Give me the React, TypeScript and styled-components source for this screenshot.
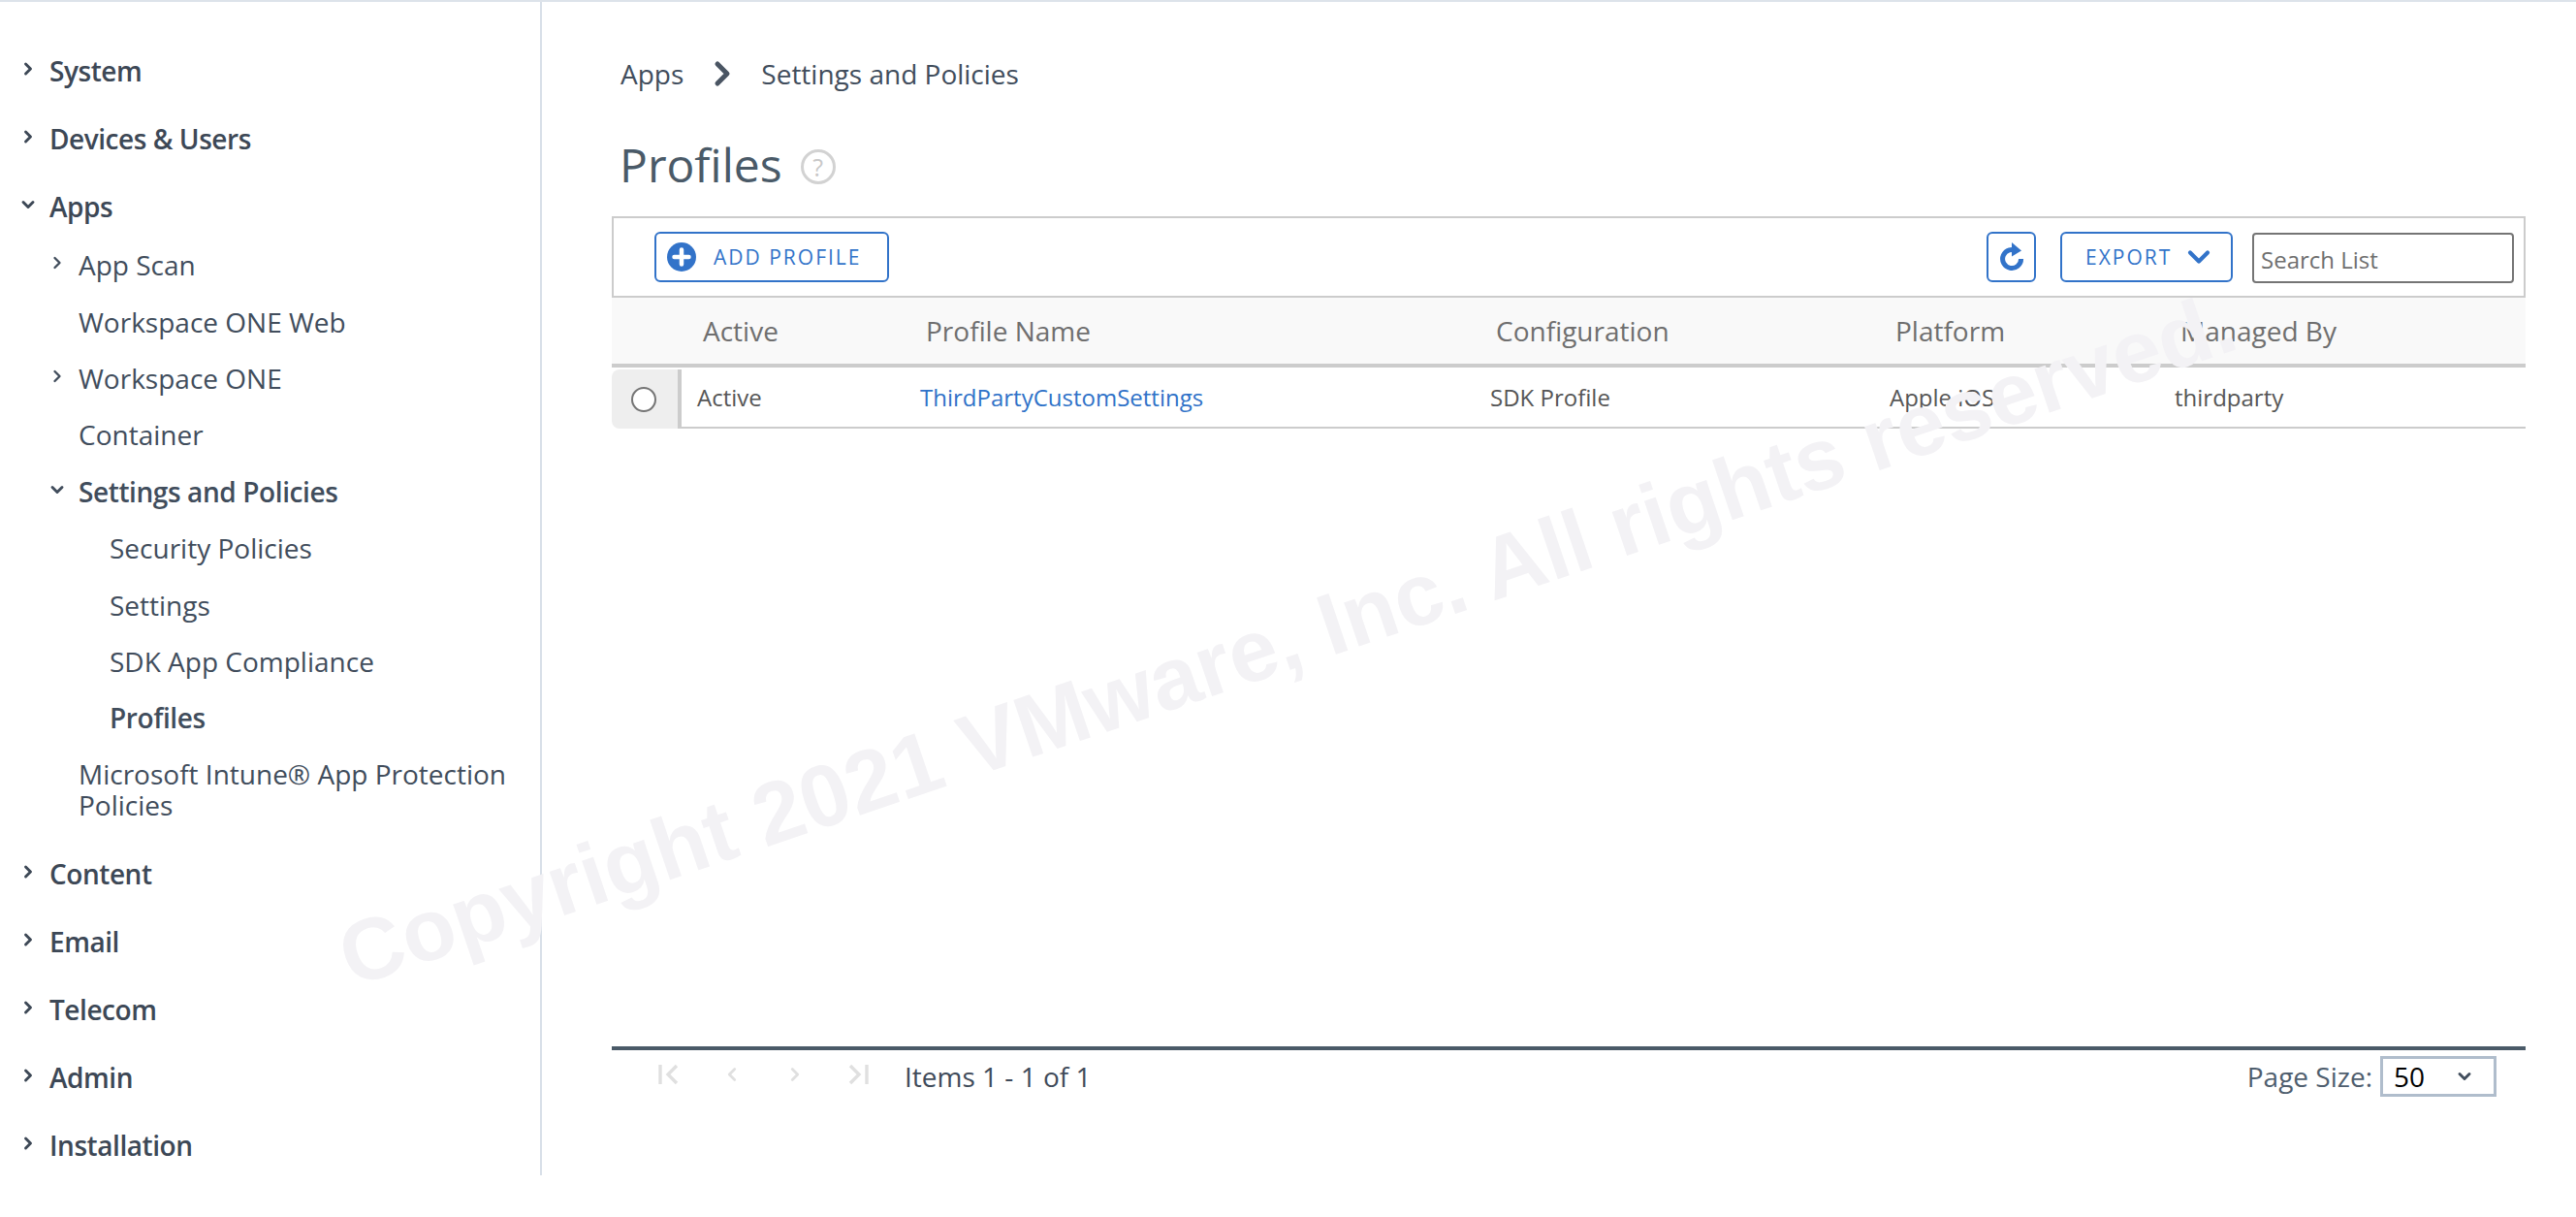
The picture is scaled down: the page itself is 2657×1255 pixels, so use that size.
import React from 'react';
import styled, { createGlobalStyle } from 'styled-components';
import { ChevronDown, ChevronLeft, ChevronRight } from 'lucide-react';

const GlobalStyle = createGlobalStyle`
  html, body {
    margin: 0;
    padding: 0;
    background: #fff;
    font-family: 'Open Sans', 'Liberation Sans', sans-serif;
    color: #414d5c;
  }
  * { box-sizing: border-box; }
`;

const Page = styled.div`
  position: relative;
  width: 2657px;
  height: 1255px;
  overflow: hidden;
  border-top: 2px solid #dde3ea;
`;

const Layout = styled.div`
  display: flex;
  height: 1210px;
`;

const Sidebar = styled.nav`
  width: 559px;
  flex-shrink: 0;
  border-right: 2px solid #d8dfe8;
  padding-top: 36px;
`;

const TopRow = styled.div`
  display: flex;
  align-items: center;
  height: 70px;
  padding-left: 19px;
  font-size: 28px;
  font-weight: 600;
  letter-spacing: -0.45px;
  color: #3d4856;
`;

const Caret = styled.span`
  display: flex;
  justify-content: center;
  width: 20px;
  margin-right: 12px;
  margin-top: -4px;
`;

const SubList = styled.div`
  margin: -4px 0 20px;
`;

const SubRow = styled.div<{ $level: number; $bold?: boolean }>`
  display: flex;
  align-items: center;
  height: 58.4px;
  padding-left: ${p => (p.$level === 1 ? 49 : 113)}px;
  font-size: 28px;
  font-weight: ${p => (p.$bold ? 600 : 400)};
  letter-spacing: ${p => (p.$bold ? '-0.4px' : '0')};
  color: #414d5c;
`;

const NoCaret = styled.span`
  display: block;
  width: 32px;
`;

const WrappedRow = styled.div`
  padding: 12px 20px 0 81px;
  font-size: 28px;
  line-height: 32px;
  color: #414d5c;
`;

const Main = styled.main`
  flex: 1;
  display: flex;
  flex-direction: column;
  padding: 0 52px 0 72px;
`;

const Breadcrumb = styled.div`
  display: flex;
  align-items: center;
  height: 40px;
  margin: 54px 0 0 9px;
  font-size: 28px;
  color: #414d5c;
`;

const Crumb = styled.span``;

const CrumbSep = styled.span`
  display: flex;
  justify-content: center;
  margin: 0 20px;
  color: #4a5563;
`;

const TitleRow = styled.div`
  display: flex;
  align-items: center;
  gap: 19px;
  height: 68px;
  margin: 39px 0 0 8px;
`;

const Title = styled.h1`
  margin: 0;
  font-size: 48px;
  font-weight: 400;
  color: #4a5a68;
`;

const HelpIcon = styled.span`
  display: flex;
  align-items: center;
  justify-content: center;
  width: 36px;
  height: 36px;
  margin-top: 6px;
  border: 3px solid #d2d2d2;
  border-radius: 50%;
  font-size: 25px;
  color: #c8c8c8;
`;

const Toolbar = styled.div`
  display: flex;
  align-items: center;
  height: 84px;
  margin-top: 20px;
  padding: 0 10px 0 42px;
  border: 2px solid #cccccc;
`;

const OutlineButton = styled.button`
  display: flex;
  align-items: center;
  height: 52px;
  padding: 0;
  border: 2px solid #3273c9;
  border-radius: 6px;
  background: #fff;
  color: #3273c9;
  font-family: inherit;
  font-size: 21px;
  letter-spacing: 2px;
`;

const AddButton = styled(OutlineButton)`
  width: 242px;
  gap: 17px;
  padding-left: 10px;
`;

const RefreshButton = styled(OutlineButton)`
  width: 51px;
  justify-content: center;
  margin-left: auto;
`;

const ExportButton = styled(OutlineButton)`
  width: 178px;
  gap: 10px;
  padding-left: 24px;
  margin-left: 25px;
`;

const SearchBox = styled.div`
  display: flex;
  align-items: center;
  width: 270px;
  height: 52px;
  margin: 2px 0 0 20px;
  padding: 2px 0 0 7px;
  border: 2px solid #757575;
  border-radius: 4px;
  font-size: 24px;
  color: #6f6f6f;
`;

const columns = '72px 230px 588px 412px 294px 1fr';

const HeaderRow = styled.div`
  display: grid;
  grid-template-columns: ${columns};
  align-items: center;
  height: 72px;
  background: #f9f9f9;
  border-bottom: 4px solid #cccccc;
  font-size: 28px;
  color: #6f6f6f;
`;

const HeaderCell = styled.div`
  padding-left: 22px;
`;

const DataRow = styled.div`
  display: grid;
  grid-template-columns: ${columns};
  align-items: center;
  height: 63px;
  font-size: 24px;
  color: #565656;
`;

const RadioCell = styled.div`
  display: flex;
  align-items: center;
  height: 61px;
  margin-top: 2px;
  padding-left: 20px;
  background: #eeeeee;
  border-right: 4px solid #cccccc;
  border-radius: 8px 0 0 8px;
`;

const Radio = styled.span`
  display: block;
  width: 26px;
  height: 26px;
  border: 2px solid #757575;
  border-radius: 50%;
  background: #fff;
`;

const Cell = styled.div`
  display: flex;
  align-items: center;
  height: 100%;
  padding-left: 16px;
  border-bottom: 2px solid #cccccc;
`;

const LinkCell = styled(Cell)`
  color: #2f72c8;
`;

const Spacer = styled.div`
  flex: 1;
`;

const Pager = styled.footer`
  display: flex;
  align-items: flex-start;
  height: 133px;
  padding: 6px 30px 0 0;
  border-top: 4px solid #4a5a68;
`;

const PagerIcons = styled.div`
  display: flex;
  align-items: center;
  gap: 43px;
  height: 38px;
  padding-left: 48px;
  color: #e0e0e0;
`;

const PagerSlot = styled.span`
  display: flex;
  justify-content: center;
  width: 22px;
`;

const PagerText = styled.span`
  display: flex;
  align-items: center;
  height: 42px;
  margin-left: 37px;
  font-size: 28px;
  color: #3f4b5a;
`;

const PageSize = styled.div`
  display: flex;
  align-items: center;
  gap: 8px;
  margin-left: auto;
  font-size: 28px;
  color: #4f5e6e;
`;

const SizeSelect = styled.div`
  display: flex;
  align-items: center;
  justify-content: space-between;
  width: 120px;
  height: 42px;
  padding: 0 20px 0 11px;
  border: 3px solid #b0bdcc;
  font-size: 28px;
  color: #000;
`;

// sits above the table on purpose, it covers parts of the text in the reference
const Watermark = styled.div`
  position: absolute;
  left: 299px;
  top: 606px;
  transform: rotate(-18.7deg);
  transform-origin: 50% 50%;
  font-family: 'Liberation Sans', Arial, sans-serif;
  font-size: 90px;
  font-weight: 700;
  white-space: nowrap;
  color: #f3f2f5;
  pointer-events: none;
`;

const ClosedCaret = () => <ChevronRight size={24} strokeWidth={3.5} />;
const OpenCaret = () => <ChevronDown size={24} strokeWidth={3.5} />;
const SubCaret = () => <ChevronRight size={20} strokeWidth={2.8} />;

const PlusIcon = () => (
  <svg width="32" height="32" viewBox="0 0 32 32">
    <circle cx="16" cy="16" r="15" fill="#3273c9" />
    <path d="M16 8.5v15M8.5 16h15" stroke="#fff" strokeWidth="4.5" strokeLinecap="round" />
  </svg>
);

const RefreshIcon = () => (
  <svg width="28" height="32" viewBox="0 0 28 32">
    <path d="M19.5 10.2A9.5 9.5 0 1 0 23.6 18" fill="none" stroke="#3273c9" strokeWidth="5" />
    <path d="M14 1l10 8.5-10 6z" fill="#3273c9" />
  </svg>
);

const FirstPageIcon = () => (
  <svg width="22" height="22" viewBox="0 0 22 22" fill="none" stroke="currentColor" strokeWidth="3.4">
    <path d="M2 1v20M19 2l-9 9 9 9" />
  </svg>
);

const LastPageIcon = () => (
  <svg width="22" height="22" viewBox="0 0 22 22" fill="none" stroke="currentColor" strokeWidth="3.4">
    <path d="M20 1v20M3 2l9 9-9 9" />
  </svg>
);

const App: React.FC = () => (
  <Page>
    <GlobalStyle />
    <Layout>
      <Sidebar>
        <TopRow><Caret><ClosedCaret /></Caret>System</TopRow>
        <TopRow><Caret><ClosedCaret /></Caret>Devices &amp; Users</TopRow>
        <TopRow><Caret><OpenCaret /></Caret>Apps</TopRow>
        <SubList>
          <SubRow $level={1}><Caret><SubCaret /></Caret>App Scan</SubRow>
          <SubRow $level={1}><NoCaret />Workspace ONE Web</SubRow>
          <SubRow $level={1}><Caret><SubCaret /></Caret>Workspace ONE</SubRow>
          <SubRow $level={1}><NoCaret />Container</SubRow>
          <SubRow $level={1} $bold><Caret><OpenCaret /></Caret>Settings and Policies</SubRow>
          <SubRow $level={2}>Security Policies</SubRow>
          <SubRow $level={2}>Settings</SubRow>
          <SubRow $level={2}>SDK App Compliance</SubRow>
          <SubRow $level={2} $bold>Profiles</SubRow>
          <WrappedRow>Microsoft Intune® App Protection Policies</WrappedRow>
        </SubList>
        <TopRow><Caret><ClosedCaret /></Caret>Content</TopRow>
        <TopRow><Caret><ClosedCaret /></Caret>Email</TopRow>
        <TopRow><Caret><ClosedCaret /></Caret>Telecom</TopRow>
        <TopRow><Caret><ClosedCaret /></Caret>Admin</TopRow>
        <TopRow><Caret><ClosedCaret /></Caret>Installation</TopRow>
      </Sidebar>
      <Main>
        <Breadcrumb>
          <Crumb>Apps</Crumb>
          <CrumbSep><ChevronRight size={40} strokeWidth={3} /></CrumbSep>
          <Crumb>Settings and Policies</Crumb>
        </Breadcrumb>
        <TitleRow>
          <Title>Profiles</Title>
          <HelpIcon>?</HelpIcon>
        </TitleRow>
        <Toolbar>
          <AddButton><PlusIcon />ADD PROFILE</AddButton>
          <RefreshButton aria-label="Refresh"><RefreshIcon /></RefreshButton>
          <ExportButton>EXPORT<ChevronDown size={36} strokeWidth={2.8} /></ExportButton>
          <SearchBox>Search List</SearchBox>
        </Toolbar>
        <HeaderRow>
          <div />
          <HeaderCell>Active</HeaderCell>
          <HeaderCell>Profile Name</HeaderCell>
          <HeaderCell>Configuration</HeaderCell>
          <HeaderCell>Platform</HeaderCell>
          <HeaderCell>Managed By</HeaderCell>
        </HeaderRow>
        <DataRow>
          <RadioCell><Radio /></RadioCell>
          <Cell>Active</Cell>
          <LinkCell>ThirdPartyCustomSettings</LinkCell>
          <Cell>SDK Profile</Cell>
          <Cell>Apple iOS</Cell>
          <Cell>thirdparty</Cell>
        </DataRow>
        <Spacer />
        <Pager>
          <PagerIcons>
            <PagerSlot><FirstPageIcon /></PagerSlot>
            <PagerSlot><ChevronLeft size={28} strokeWidth={3} /></PagerSlot>
            <PagerSlot><ChevronRight size={28} strokeWidth={3} /></PagerSlot>
            <PagerSlot><LastPageIcon /></PagerSlot>
          </PagerIcons>
          <PagerText>Items 1 - 1 of 1</PagerText>
          <PageSize>
            Page Size:
            <SizeSelect>50<ChevronDown size={20} strokeWidth={3.4} color="#414d5c" /></SizeSelect>
          </PageSize>
        </Pager>
      </Main>
    </Layout>
    <Watermark>Copyright 2021 VMware, Inc. All rights reserved.</Watermark>
  </Page>
);

export default App;
